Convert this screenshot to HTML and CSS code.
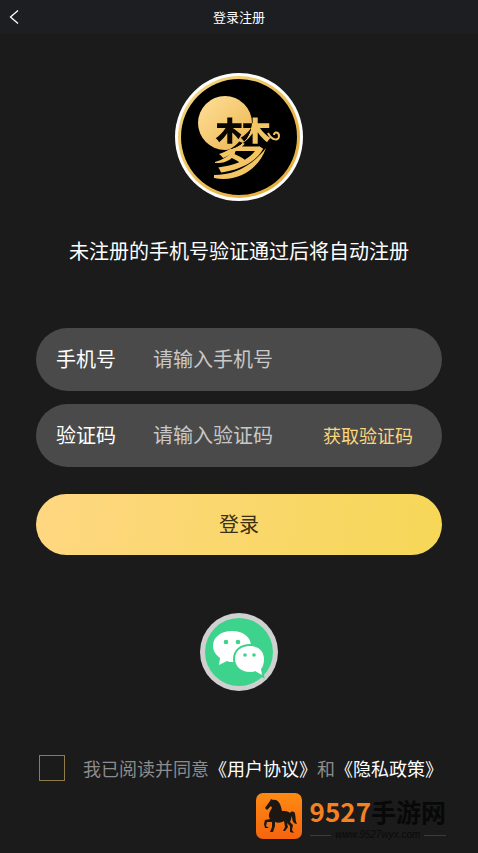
FILE: index.html
```html
<!DOCTYPE html>
<html lang="zh-CN">
<head>
    <meta charset="UTF-8">
    <meta name="viewport" content="width=device-width, initial-scale=1.0">
    <title>登录注册</title>
    <link rel="stylesheet" href="styles.css">
</head>
<body>
    <header class="navbar">
        <button class="back" type="button" aria-label="返回">
            <svg width="10" height="14" viewBox="0 0 10 14"><path d="M9 0.500 L1.500 7 L9 13.500" fill="none" stroke="#fff" stroke-width="1.300"/></svg>
        </button>
        <h1>登录注册</h1>
    </header>

    <main class="container">
        <svg class="logo" viewBox="0 0 128 128" role="img" aria-label="梦">
            <defs>
                <linearGradient id="ring" x1="0" y1="0" x2="1" y2="1">
                    <stop offset="0" stop-color="#f6d98a"/>
                    <stop offset="1" stop-color="#e3a82c"/>
                </linearGradient>
                <linearGradient id="moon" x1="0" y1="0" x2="1" y2="1">
                    <stop offset="0" stop-color="#ffe09a"/>
                    <stop offset="1" stop-color="#ecb54e"/>
                </linearGradient>
                <radialGradient id="ink" gradientUnits="userSpaceOnUse" cx="50" cy="50" r="27">
                    <stop offset="0.980" stop-color="#0a0702"/>
                    <stop offset="1" stop-color="#f3c563"/>
                </radialGradient>
            </defs>
            <circle cx="64" cy="64" r="64" fill="#fff"/>
            <circle cx="64" cy="64" r="61" fill="url(#ring)"/>
            <circle cx="64" cy="64" r="58" fill="#000"/>
            <circle cx="50" cy="50" r="27" fill="url(#moon)"/>
            <text class="logo-text" x="39" y="94" fill="url(#ink)">梦</text>
            <path d="M93 60 C97 68 104 68 104 63 C104 59 99 58 99 62" fill="none" stroke="#f3c563" stroke-width="2"/>
            <path d="M39 102 C58 102 76 94 91 75 C84 96 62 110 39 105 Z" fill="#f3c563"/>
            <path d="M40 89 C48 87 55 82 60 76 C62 84 52 91 40 90 Z" fill="#f3c563"/>
        </svg>

        <p class="tip">未注册的手机号验证通过后将自动注册</p>

        <form class="login-form">
            <div class="field">
                <label for="phone">手机号</label>
                <input type="tel" id="phone" placeholder="请输入手机号">
            </div>
            <div class="field">
                <label for="code">验证码</label>
                <input type="text" id="code" placeholder="请输入验证码">
                <button class="get-code" type="button">获取验证码</button>
            </div>
            <button class="submit" type="submit">登录</button>
        </form>

        <button class="wechat" type="button" aria-label="微信登录">
            <svg viewBox="0 0 78 78">
                <circle cx="39" cy="39" r="39" fill="#d0d0d0"/>
                <circle cx="39" cy="39" r="34" fill="#3dd38c"/>
                <path d="M32 18 C21 18 13 24 13 33 C13 38 16 42 20 45 L19 52 L27 48 C29 49 30 49 32 49 C43 49 51 42 51 33 C51 24 43 18 32 18 Z" fill="#fff"/>
                <path d="M50 33 C41 33 35 38 35 46 C35 53 41 59 50 59 C52 59 54 59 55 58 L62 62 L61 56 C63 54 64 50 64 46 C64 38 58 33 50 33 Z" fill="#fff" stroke="#3dd38c" stroke-width="4" paint-order="stroke"/>
                <g fill="#3dd38c">
                    <circle cx="26" cy="29" r="2.300"/>
                    <circle cx="38" cy="29" r="2.300"/>
                    <circle cx="45" cy="42" r="1.800"/>
                    <circle cx="54" cy="42" r="1.800"/>
                </g>
            </svg>
        </button>

        <div class="agreement">
            <input type="checkbox" id="agree">
            <label for="agree">我已阅读并同意<a href="#">《用户协议》</a>和<a href="#">《隐私政策》</a></label>
        </div>
    </main>

    <footer class="brand">
        <svg class="horse" viewBox="0 0 46 46">
            <defs>
                <linearGradient id="orange" x1="0" y1="0" x2="0" y2="1">
                    <stop offset="0" stop-color="#ff8a12"/>
                    <stop offset="1" stop-color="#f4650f"/>
                </linearGradient>
            </defs>
            <rect width="46" height="46" rx="7" fill="url(#orange)"/>
            <path d="M14 8 L15 6 L17 7 C21 6 24 10 25 14 L26 18 C29 18 32 18 34 20 C35 18 39 18 39 21 C40 24 39 27 41 31 C37 31 36 27 36 23 C35 25 35 27 34 29 L37 32 L36 37 L38 40 L34 39 L34 33 L31 30 L32 34 L29 38 L27 38 L29 34 L28 28 C25 30 22 30 19 29 L19 33 L17 39 L14 39 L16 34 L16 29 L11 29 L10 33 L13 35 L9 35 L8 31 L9 27 L14 26 C12 23 13 19 16 15 L15 13 L11 17 L9 15 Z" fill="#1d1713"/>
        </svg>
        <div class="brand-text">
            <div class="brand-name"><span>9527</span>手游网</div>
            <div class="brand-url">www.9527wyx.com</div>
        </div>
    </footer>
</body>
</html>
```
FILE: styles.css
```css
* {
    box-sizing: border-box;
}
body {
    margin: 0;
    min-height: 100vh;
    background-color: #1b1b1b;
    color: #fff;
    font-family: "Noto Sans CJK SC", sans-serif;
    font-size: 20px;
}
button,
input {
    font-family: inherit;
    font-size: inherit;
}
button {
    padding: 0;
    border: none;
    background: none;
    cursor: pointer;
}
svg {
    display: block;
}
.navbar {
    display: grid;
    grid-template-columns: 28px 1fr 28px;
    align-items: center;
    height: 34px;
    padding-bottom: 2px;
    background-color: #1d1e22;
}
.navbar h1 {
    margin: 0;
    font-size: 13px;
    font-weight: normal;
    text-align: center;
}
.back {
    padding: 2px 0 0 9px;
}
.container {
    display: flex;
    flex-direction: column;
    align-items: center;
    padding: 39px 36px 0;
}
.logo {
    width: 128px;
    height: 128px;
}
.logo-text {
    font-size: 58px;
    font-weight: 500;
}
.tip {
    margin: 35px 0 62px;
    line-height: 30px;
    white-space: nowrap;
}
.login-form {
    display: flex;
    flex-direction: column;
    gap: 13px;
    width: 100%;
}
.field {
    display: flex;
    align-items: center;
    height: 63px;
    padding: 0 29px 2px 20px;
    border-radius: 32px;
    background-color: #4a4a4a;
}
.field label {
    width: 97px;
}
.field input {
    flex: 1;
    min-width: 0;
    padding: 0;
    border: none;
    outline: none;
    background: none;
    color: #fff;
}
.field input::placeholder {
    color: #c8c8c8;
}
.get-code {
    color: #fad77c;
    font-size: 18px;
}
.submit {
    height: 61px;
    margin-top: 14px;
    padding-bottom: 2px;
    border-radius: 31px;
    background: linear-gradient(100deg, #ffd782, #f6d757);
    color: #3a3115;
}
.wechat {
    width: 78px;
    height: 78px;
    margin-top: 58px;
}
.agreement {
    display: flex;
    align-items: center;
    gap: 18px;
    align-self: flex-start;
    margin-top: 64px;
    padding-left: 3px;
    color: #8c8c8c;
    font-size: 18px;
    line-height: 26px;
    white-space: nowrap;
}
.agreement input {
    appearance: none;
    width: 26px;
    height: 26px;
    margin: 0;
    border: 1px solid #8f7c4a;
}
.agreement input:checked {
    background-color: #fad77c;
}
.agreement a {
    color: #fff;
    text-decoration: none;
}
.brand {
    display: flex;
    justify-content: flex-end;
    gap: 8px;
    padding: 12px 32px 0 0;
}
.horse {
    width: 46px;
    height: 46px;
}
.brand-name {
    color: #080808;
    font-size: 25px;
    font-weight: bold;
    line-height: 36px;
}
.brand-name span {
    color: #f58220;
    font-size: 26px;
}
.brand-url {
    display: flex;
    align-items: center;
    gap: 4px;
    color: #0a0a0a;
    font-family: "Liberation Sans", sans-serif;
    font-size: 10px;
    font-style: italic;
    line-height: 12px;
}
.brand-url::before,
.brand-url::after {
    content: "";
    flex: 1;
    height: 1px;
    background-color: #3c3c3c;
}
```
